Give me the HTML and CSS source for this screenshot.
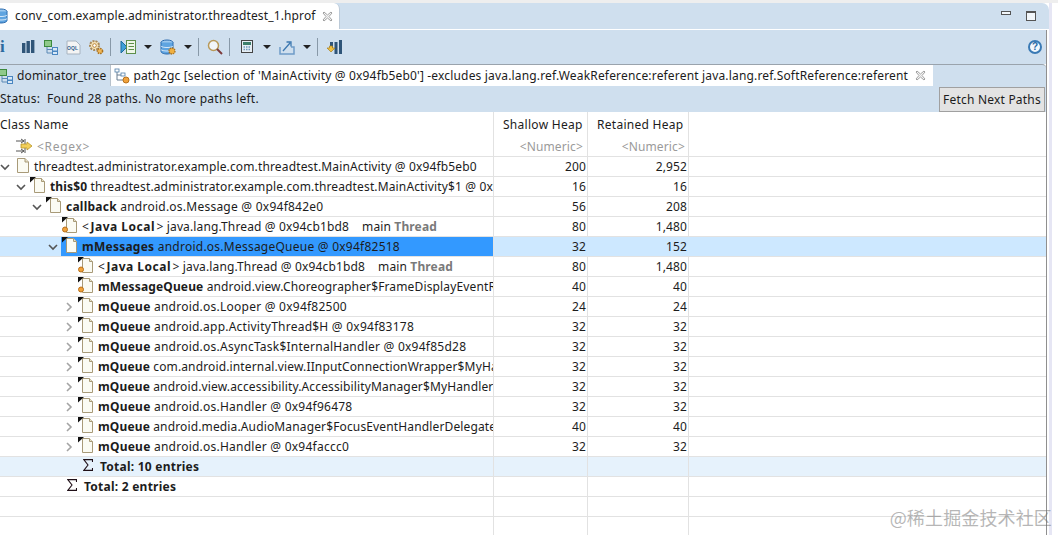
FILE: index.html
```html
<!DOCTYPE html>
<html lang="en">
<head>
<meta charset="utf-8">
<title>conv_com.example.administrator.threadtest_1.hprof</title>
<link rel="stylesheet" href="styles.css">
</head>
<body>
<svg class="defs" width="0" height="0" aria-hidden="true">
  <symbol id="doc" viewBox="0 0 16 16">
    <path d="M3.500 1.500H11L14.500 5V15.500H3.500Z" fill="#fbfbf3" stroke="#a89a78"/>
    <path d="M11 1.500V5H14.500" fill="#e8e2c8" stroke="#a89a78"/>
  </symbol>
  <symbol id="field" viewBox="0 0 16 16">
    <path d="M4.500 1.500H11.500L14.500 4.500V15.500H4.500Z" fill="#fbfbf3" stroke="#a89a78"/>
    <path d="M11.500 1.500V4.500H14.500" fill="#e8e2c8" stroke="#a89a78"/>
    <path d="M0 0H6L0 5.500Z" fill="#111"/>
  </symbol>
  <symbol id="local" viewBox="0 0 16 16">
    <path d="M4.500 1.500H11.500L14.500 4.500V15.500H4.500Z" fill="#fbfbf3" stroke="#a89a78"/>
    <path d="M11.500 1.500V4.500H14.500" fill="#e8e2c8" stroke="#a89a78"/>
    <path d="M0 0H6L0 5.500Z" fill="#111"/>
    <circle cx="3" cy="12.500" r="2.500" fill="#f0a23c" stroke="#b8701a"/>
  </symbol>
  <symbol id="open" viewBox="0 0 10 10"><path d="M1 3L5 7L9 3" fill="none" stroke="#555" stroke-width="1.600"/></symbol>
  <symbol id="closed" viewBox="0 0 10 10"><path d="M3 1L7 5L3 9" fill="none" stroke="#a4a4a4" stroke-width="1.600"/></symbol>
  <symbol id="sigma" viewBox="0 0 10 12"><path d="M9.500 3V.6H.8L5 6L.8 11.400H9.500V9" fill="none" stroke="#201018" stroke-width="1.100"/></symbol>
  <symbol id="close" viewBox="0 0 11 11"><path d="M1 2L2 1L5.500 4L9 1L10 2L7 5.500L10 9L9 10L5.500 7L2 10L1 9L4 5.500Z" fill="#f4f4f4" stroke="#8a8a8a" stroke-width=".8"/></symbol>
  <symbol id="tree" viewBox="0 0 16 16">
    <rect x="1.500" y="1.500" width="7" height="6" fill="#8fc98a" stroke="#3d8a3d"/>
    <path d="M4 8V14H9M4 10.500H9" fill="none" stroke="#5b89b5"/>
    <rect x="9.500" y="8.500" width="5" height="3.500" fill="#d9e8f6" stroke="#4a86c0"/>
    <rect x="9.500" y="12.500" width="5" height="3" fill="#d9e8f6" stroke="#4a86c0"/>
  </symbol>
  <symbol id="gc" viewBox="0 0 16 16">
    <path d="M3 2V12H9M3 7H9" fill="none" stroke="#6a7f92"/>
    <rect x="1" y="1" width="4" height="3" fill="#fff" stroke="#4f7da8" stroke-width=".8"/>
    <rect x="7" y="5" width="4" height="3" fill="#fff" stroke="#4f7da8" stroke-width=".8"/>
    <circle cx="12" cy="12" r="3" fill="#f0a23c" stroke="#b8701a"/>
  </symbol>
  <symbol id="db" viewBox="0 0 16 16">
    <ellipse cx="7" cy="3.500" rx="6" ry="2.500" fill="#9cc8ee" stroke="#2b6cb0"/>
    <path d="M1 3.500V12.500C1 14 4 15 7 15C10 15 13 14 13 12.500V3.500" fill="#5fa4e0" stroke="#2b6cb0"/>
    <path d="M1 7C2 9 12 9 13 7M1 10.500C2 12.500 12 12.500 13 10.500" fill="none" stroke="#d6e8f8"/>
  </symbol>
  <symbol id="gear" viewBox="0 0 16 16">
    <circle cx="6.500" cy="6.500" r="4.500" fill="#f6e3b8" stroke="#a98a5a" stroke-width="2" stroke-dasharray="2 1.100"/>
    <circle cx="6.500" cy="6.500" r="1.800" fill="#fff" stroke="#a8701f" stroke-width=".8"/>
    <circle cx="12" cy="12" r="2.600" fill="#f0b858" stroke="#a8701f" stroke-width="1.500" stroke-dasharray="1.500 .9"/>
  </symbol>
</svg>

<div class="editor-tabs">
  <div class="editor-tab">
    <svg class="ic-file"><use href="#db"/></svg>
    <span class="editor-title">conv_com.example.administrator.threadtest_1.hprof</span>
    <svg class="ic-close"><use href="#close"/></svg>
  </div>
  <div class="win-controls">
    <span class="win-min"></span>
    <span class="win-max"></span>
  </div>
</div>

<div class="panel">
  <div class="toolbar">
    <span class="tb-info">i</span>
    <svg class="tb-ic tb-first" viewBox="0 0 16 16"><rect x="2" y="4" width="3.400" height="10" fill="#2f5578"/><rect x="6.500" y="2" width="3.400" height="12" fill="#2f5578"/><rect x="11" y="1" width="3.400" height="13" fill="#2f5578"/></svg>
    <svg class="tb-ic m7"><use href="#tree"/></svg>
    <svg class="tb-ic m6" viewBox="0 0 16 16"><path d="M2 2H11L15 6V15H2Z" fill="#f4f4f4" stroke="#a8b4c0"/><text class="oql" x="2" y="11">OQL</text></svg>
    <svg class="tb-ic m7"><use href="#gear"/></svg>
    <span class="tb-sep"></span>
    <svg class="tb-ic m9" viewBox="0 0 16 16"><path d="M1 2L7 8L1 14Z" fill="#3fa0d8" stroke="#1c6a9c"/><rect x="6.500" y="1.500" width="9" height="13" fill="#eef6e8" stroke="#5d8f4a"/><path d="M8.500 4.500H14M8.500 7.500H14M8.500 10.500H14" stroke="#5d8f4a"/></svg>
    <span class="tb-drop"></span>
    <svg class="tb-ic" viewBox="0 0 16 16"><use href="#db" width="16" height="16"/><circle cx="12" cy="12" r="3" fill="#f0b040" stroke="#a8701f" stroke-width="1.300" stroke-dasharray="1.500 .8"/></svg>
    <span class="tb-drop"></span>
    <span class="tb-sep"></span>
    <svg class="tb-ic" viewBox="0 0 16 16"><circle cx="6.500" cy="6.500" r="5" fill="#f2f6fa" stroke="#b99a5a" stroke-width="1.500"/><path d="M10 10L15 15" stroke="#7d3b3b" stroke-width="2"/></svg>
    <span class="tb-sep"></span>
    <svg class="tb-ic m9" viewBox="0 0 16 16"><rect x="2.500" y="1.500" width="11" height="12" fill="#e6eef4" stroke="#444"/><rect x="4" y="3" width="8" height="3" fill="#3c7f6c"/><path d="M4.500 8H11.500M4.500 10.500H11.500" stroke="#6d98bc" stroke-width="1.500" stroke-dasharray="1.500 1"/></svg>
    <span class="tb-drop"></span>
    <svg class="tb-ic" viewBox="0 0 16 16"><path d="M1 8V15H15V8H12" fill="none" stroke="#6f9cc8" stroke-width="1.500"/><path d="M4 12L11 4M7.500 3H12V7.500" fill="none" stroke="#3d78b0" stroke-width="1.300"/></svg>
    <span class="tb-drop"></span>
    <span class="tb-sep"></span>
    <svg class="tb-ic" viewBox="0 0 16 16"><rect x="4" y="3" width="3" height="6" fill="#2f5578"/><rect x="8.500" y="3" width="3" height="12" fill="#2f5578"/><rect x="13" y="1" width="3" height="14" fill="#2f5578"/><path d="M1 9L5 13L9 9H6.500V7H3.500V9Z" fill="#f0c040" stroke="#a8801f" stroke-width=".7"/></svg>
    <span class="tb-help">?</span>
  </div>

  <div class="result-tabs">
    <div class="rtab">
      <svg class="rtab-ic"><use href="#tree"/></svg>
      <span>dominator_tree</span>
    </div>
    <div class="rtab rtab-active">
      <svg class="rtab-ic"><use href="#gc"/></svg>
      <span>path2gc [selection of 'MainActivity @ 0x94fb5eb0'] -excludes java.lang.ref.WeakReference:referent java.lang.ref.SoftReference:referent</span>
      <svg class="ic-close"><use href="#close"/></svg>
    </div>
    <div class="rtab-rest"></div>
  </div>

  <div class="status">
    <span class="status-text">Status:&nbsp; Found 28 paths. No more paths left.</span>
    <button class="fetch" type="button">Fetch Next Paths</button>
  </div>

  <div class="table">
    <div class="row head">
      <div class="c-name">Class Name</div>
      <div class="c-num c-left">Shallow Heap</div>
      <div class="c-num c-left c-ret">Retained Heap</div>
    </div>
    <div class="row filter">
      <div class="c-name">
        <svg class="regex-ic" viewBox="0 0 16 16"><path d="M0 3H8M0 13H8" stroke="#555"/><path d="M5 1L8 3L5 5M5 11L8 13L5 15" fill="none" stroke="#555"/><path d="M9 1V15" stroke="#555"/><path d="M5 6H11V4L16 8L11 12V10H5Z" fill="#f2cf5a" stroke="#b8962a" stroke-width=".8"/></svg>
        <span class="regex">&lt;Regex&gt;</span>
      </div>
      <div class="c-num">&lt;Numeric&gt;</div>
      <div class="c-num c-ret">&lt;Numeric&gt;</div>
    </div>

    <div class="row">
      <div class="c-name l0"><svg class="tw"><use href="#open"/></svg><div class="lab"><svg class="ic"><use href="#doc"/></svg><span class="tx">threadtest.administrator.example.com.threadtest.MainActivity @ 0x94fb5eb0</span></div></div>
      <div class="c-num">200</div><div class="c-num c-ret">2,952</div>
    </div>
    <div class="row">
      <div class="c-name l1"><svg class="tw"><use href="#open"/></svg><div class="lab"><svg class="ic"><use href="#field"/></svg><span class="tx"><b>this$0</b> threadtest.administrator.example.com.threadtest.MainActivity$1 @ 0x94fb5f78</span></div></div>
      <div class="c-num">16</div><div class="c-num c-ret">16</div>
    </div>
    <div class="row">
      <div class="c-name l2"><svg class="tw"><use href="#open"/></svg><div class="lab"><svg class="ic"><use href="#field"/></svg><span class="tx wide"><b>callback</b> android.os.Message @ 0x94f842e0</span></div></div>
      <div class="c-num">56</div><div class="c-num c-ret">208</div>
    </div>
    <div class="row">
      <div class="c-name l3"><span class="tw"></span><div class="lab"><svg class="ic"><use href="#local"/></svg><span class="tx">&lt;<b class="jl">Java Local</b>&gt; java.lang.Thread @ 0x94cb1bd8&nbsp;&nbsp;&nbsp; main <b class="gray">Thread</b></span></div></div>
      <div class="c-num">80</div><div class="c-num c-ret">1,480</div>
    </div>
    <div class="row sel">
      <div class="c-name l3"><svg class="tw"><use href="#open"/></svg><div class="lab"><svg class="ic"><use href="#field"/></svg><span class="tx wide"><b>mMessages</b> android.os.MessageQueue @ 0x94f82518</span></div></div>
      <div class="c-num">32</div><div class="c-num c-ret">152</div>
    </div>
    <div class="row">
      <div class="c-name l4"><span class="tw"></span><div class="lab"><svg class="ic"><use href="#local"/></svg><span class="tx">&lt;<b class="jl">Java Local</b>&gt; java.lang.Thread @ 0x94cb1bd8&nbsp;&nbsp;&nbsp; main <b class="gray">Thread</b></span></div></div>
      <div class="c-num">80</div><div class="c-num c-ret">1,480</div>
    </div>
    <div class="row">
      <div class="c-name l4"><span class="tw"></span><div class="lab"><svg class="ic"><use href="#local"/></svg><span class="tx"><b>mMessageQueue</b> android.view.Choreographer$FrameDisplayEventReceiver</span></div></div>
      <div class="c-num">40</div><div class="c-num c-ret">40</div>
    </div>
    <div class="row">
      <div class="c-name l4"><svg class="tw"><use href="#closed"/></svg><div class="lab"><svg class="ic"><use href="#field"/></svg><span class="tx wide"><b>mQueue</b> android.os.Looper @ 0x94f82500</span></div></div>
      <div class="c-num">24</div><div class="c-num c-ret">24</div>
    </div>
    <div class="row">
      <div class="c-name l4"><svg class="tw"><use href="#closed"/></svg><div class="lab"><svg class="ic"><use href="#field"/></svg><span class="tx wide"><b>mQueue</b> android.app.ActivityThread$H @ 0x94f83178</span></div></div>
      <div class="c-num">32</div><div class="c-num c-ret">32</div>
    </div>
    <div class="row">
      <div class="c-name l4"><svg class="tw"><use href="#closed"/></svg><div class="lab"><svg class="ic"><use href="#field"/></svg><span class="tx wide"><b>mQueue</b> android.os.AsyncTask$InternalHandler @ 0x94f85d28</span></div></div>
      <div class="c-num">32</div><div class="c-num c-ret">32</div>
    </div>
    <div class="row">
      <div class="c-name l4"><svg class="tw"><use href="#closed"/></svg><div class="lab"><svg class="ic"><use href="#field"/></svg><span class="tx"><b>mQueue</b> com.android.internal.view.IInputConnectionWrapper$MyHandler</span></div></div>
      <div class="c-num">32</div><div class="c-num c-ret">32</div>
    </div>
    <div class="row">
      <div class="c-name l4"><svg class="tw"><use href="#closed"/></svg><div class="lab"><svg class="ic"><use href="#field"/></svg><span class="tx"><b>mQueue</b> android.view.accessibility.AccessibilityManager$MyHandler</span></div></div>
      <div class="c-num">32</div><div class="c-num c-ret">32</div>
    </div>
    <div class="row">
      <div class="c-name l4"><svg class="tw"><use href="#closed"/></svg><div class="lab"><svg class="ic"><use href="#field"/></svg><span class="tx wide"><b>mQueue</b> android.os.Handler @ 0x94f96478</span></div></div>
      <div class="c-num">32</div><div class="c-num c-ret">32</div>
    </div>
    <div class="row">
      <div class="c-name l4"><svg class="tw"><use href="#closed"/></svg><div class="lab"><svg class="ic"><use href="#field"/></svg><span class="tx"><b>mQueue</b> android.media.AudioManager$FocusEventHandlerDelegate</span></div></div>
      <div class="c-num">40</div><div class="c-num c-ret">40</div>
    </div>
    <div class="row">
      <div class="c-name l4"><svg class="tw"><use href="#closed"/></svg><div class="lab"><svg class="ic"><use href="#field"/></svg><span class="tx wide"><b>mQueue</b> android.os.Handler @ 0x94faccc0</span></div></div>
      <div class="c-num">32</div><div class="c-num c-ret">32</div>
    </div>
    <div class="row total-inner">
      <div class="c-name l4"><span class="tw"></span><div class="lab"><svg class="ic-sum"><use href="#sigma"/></svg><span class="tx wide"><b>Total: 10 entries</b></span></div></div>
      <div class="c-num"></div><div class="c-num c-ret"></div>
    </div>
    <div class="row">
      <div class="c-name l3"><span class="tw"></span><div class="lab"><svg class="ic-sum"><use href="#sigma"/></svg><span class="tx wide"><b>Total: 2 entries</b></span></div></div>
      <div class="c-num"></div><div class="c-num c-ret"></div>
    </div>
    <div class="row">
      <div class="c-name"></div><div class="c-num"></div><div class="c-num c-ret"></div>
    </div>
    <div class="row row-last">
      <div class="c-name"></div><div class="c-num"></div><div class="c-num c-ret"></div>
    </div>
  </div>
</div>

<div class="watermark">@稀土掘金技术社区</div>
</body>
</html>
```

FILE: styles.css
```css
* { box-sizing: border-box; }
html, body { margin: 0; height: 100%; }
body {
  position: relative;
  width: 1058px;
  height: 535px;
  overflow: hidden;
  padding-top: 3px;
  padding-right: 9px;
  color: #1c1c1c;
  letter-spacing: .14px;
  font: 12px/20px "Noto Sans", "Noto Sans CJK SC", sans-serif;
  background:
    linear-gradient(#eeeeee, #eeeeee) 0 0 / 100% 3px no-repeat,
    linear-gradient(#e6e6f4, #e6e6f4) 1049px 0 / 3px 100% no-repeat,
    #fff;
}
.defs { position: absolute; }

.editor-tabs {
  display: flex;
  height: 26px;
  background: #cfdfee;
  border-top-right-radius: 7px;
}
.editor-tab {
  display: flex;
  align-items: center;
  width: 340px;
  background: #fff;
  border-top-right-radius: 6px;
  border-right: 1px solid #bccad8;
}
.ic-file { width: 16px; height: 16px; margin-left: -6px; flex: none; }
.editor-title { margin-left: 5px; white-space: nowrap; }
.ic-close { width: 11px; height: 11px; margin-left: 6px; flex: none; }
.win-controls { margin-left: auto; display: flex; gap: 15px; padding: 8px 13px 0 0; }
.win-min { width: 10px; height: 4px; border: 1px solid #555; background: #f2f6fa; }
.win-max { width: 10px; height: 10px; border: 1px solid #555; border-top-width: 2px; background: #f2f6fa; }

.panel {
  display: flex;
  flex-direction: column;
  height: 505px;
  margin: 1px 2px 0 0;
  border-right: 1px solid #8f8f8f;
}
.toolbar {
  display: flex;
  align-items: center;
  height: 34px;
  background: #cfdfee;
  flex: none;
}
.tb-info { width: 8px; font: bold 17px/16px "Liberation Serif", serif; color: #2a6a9e; }
.tb-ic { width: 16px; height: 16px; flex: none; margin-left: 8px; }
.tb-first { margin-left: 12px; }
.m6 { margin-left: 6px; }
.m7 { margin-left: 7px; }
.m9 { margin-left: 9px; }
.oql { font: bold 5px "Liberation Sans", sans-serif; fill: #2f5f8f; }
.tb-sep { width: 1px; height: 18px; background: #8899a8; margin-left: 6px; flex: none; }
.tb-drop {
  width: 0;
  height: 0;
  margin-left: 8px;
  border-left: 4px solid transparent;
  border-right: 4px solid transparent;
  border-top: 4px solid #222;
  flex: none;
}
.tb-help {
  margin-left: auto;
  margin-right: 4px;
  width: 14px;
  height: 14px;
  border: 2px solid #3a7ab5;
  border-radius: 50%;
  background: #f2f8fd;
  color: #2a6aa5;
  font: bold 10px/10px "Liberation Sans", sans-serif;
  text-align: center;
}

.result-tabs {
  display: flex;
  height: 22px;
  background: #cfdfee;
  border-top: 1px solid #9aa3ac;
  border-top-right-radius: 4px;
  flex: none;
  letter-spacing: .17px;
}
.rtab {
  display: flex;
  align-items: center;
  padding-right: 4px;
  white-space: nowrap;
  letter-spacing: .13px;
  border-right: 1px solid #b8c2cc;
}
.rtab-ic { width: 16px; height: 16px; margin-right: 3px; margin-left: -2px; flex: none; }
.rtab-active { background: #fff; padding: 0 7px 0 3px; border: 0; letter-spacing: .17px; }
.rtab-active .rtab-ic { margin: 0 3px 0 0; }
.rtab-active .ic-close { margin-left: 7px; }
.rtab-rest { flex: 1; }

.status {
  display: flex;
  align-items: center;
  height: 26px;
  background: #cfdfee;
  flex: none;
}
.status-text { white-space: pre; letter-spacing: .27px; }
.fetch {
  margin: 1px 1px 0 auto;
  width: 106px;
  height: 25px;
  padding: 0;
  background: #e3e3e3;
  border: 1px solid #a0a0a0;
  color: #1c1c1c;
  font: inherit;
  letter-spacing: .2px;
}

.table { flex: 1; display: flex; flex-direction: column; }
.row {
  display: flex;
  height: 20px;
  border-bottom: 1px solid #e2e2e2;
  flex: none;
}
.head { height: 24px; border: 0; line-height: 25px; letter-spacing: .28px; }
.filter { height: 21px; line-height: 21px; color: #9a9a9a; }
.row-last { flex: 1 0 auto; border: 0; }
.c-name {
  display: flex;
  width: 494px;
  flex: none;
  overflow: hidden;
  border-right: 1px solid #e2e2e2;
  white-space: nowrap;
}
.c-num {
  width: 94px;
  padding-right: 1px;
  flex: none;
  text-align: right;
  border-right: 1px solid #e2e2e2;
}
.c-ret { width: 101px; padding-right: 1px; }
.filter .c-num { padding-right: 4px; }
.filter .c-ret { padding-right: 3px; }
.c-left { text-align: left; padding: 0 0 0 9px; }
.c-left.c-ret { padding-left: 9px; }
.regex-ic { width: 16px; height: 16px; margin: 2px 5px 0 16px; flex: none; }
.regex { letter-spacing: .7px; }

.l0 { padding-left: 0; }
.l1 { padding-left: 16px; }
.l2 { padding-left: 32px; }
.l3 { padding-left: 48px; }
.l4 { padding-left: 64px; }
.tw { width: 10px; height: 10px; margin-top: 5px; flex: none; }
.lab { display: flex; flex: 1; min-width: 0; padding-left: 1px; margin-left: 3px; }
.ic { width: 16px; height: 16px; margin: 0 4px 0 0; flex: none; }
.ic-sum { width: 10px; height: 12px; margin: 2px 7px 0 5px; flex: none; }
.tx { white-space: nowrap; }
.wide { letter-spacing: .24px; }
b { font-weight: 700; }
.jl { margin: 0 1.500px; letter-spacing: .5px; }
.gray { color: #7a7a7a; }
.sel { background: #cde8ff; }
.sel .c-num { border-right-color: #cde8ff; }
.sel .lab { background: #3399ff; }
.total-inner { background: #e6f2fc; }

.watermark {
  position: absolute;
  right: 6px;
  bottom: 8px;
  font: 18px/20px "Noto Sans CJK SC", sans-serif;
  color: rgba(110, 110, 110, .5);
}
```
